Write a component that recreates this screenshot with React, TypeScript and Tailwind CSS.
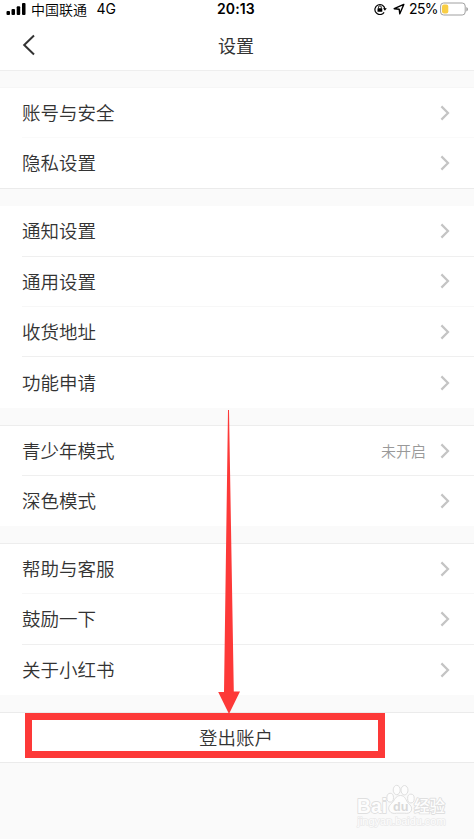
type Item = { label: string; value?: string; divider?: string };
type Section = { items: Item[]; className: string };

const FAINT = 'border-[#fafafa]';
const LINE = 'border-[#efefef]';

const sections: Section[] = [
  {
    className: 'h-[101.6px] border-t border-t-[#f6f6f6] border-b border-b-[#ebebeb]',
    items: [{ label: '账号与安全', divider: FAINT }, { label: '隐私设置' }],
  },
  {
    className: 'h-[201.4px]',
    items: [
      { label: '通知设置', divider: LINE },
      { label: '通用设置', divider: 'border-[#f7f7f7]' },
      { label: '收货地址', divider: LINE },
      { label: '功能申请' },
    ],
  },
  {
    className: 'h-[100.8px] border-t border-t-[#ededed]',
    items: [{ label: '青少年模式', value: '未开启', divider: LINE }, { label: '深色模式' }],
  },
  {
    className: 'h-[151.4px] border-t border-t-[#ededed]',
    items: [
      { label: '帮助与客服', divider: 'border-[#f7f7f7]' },
      { label: '鼓励一下', divider: LINE },
      { label: '关于小红书' },
    ],
  },
];

function StatusBar() {
  return (
    <div className="relative flex h-[18px] items-center justify-between pl-[6px] pr-[5px] text-[14px] leading-[18px] text-black">
      <div className="flex items-center">
        <svg width="20" height="13" viewBox="0 0 20 13" className="mb-px mr-[5px]">
          <rect x="0.5" y="9" width="3.5" height="4" rx="1" />
          <rect x="5.5" y="7" width="3.5" height="6" rx="1" />
          <rect x="10.7" y="4.2" width="3.5" height="8.8" rx="1" />
          <rect x="16" y="1" width="3.5" height="12" rx="1" />
        </svg>
        <span className="pb-px text-[14px] font-[350]">中国联通</span>
        <span className="ml-[9.5px] font-[Inter] font-normal">4G</span>
      </div>
      <span className="absolute left-[217px] top-0 font-[Inter] font-semibold tracking-[0.1px]">20:13</span>
      <div className="flex items-center">
        <svg width="13" height="12" viewBox="0 0 13 12" fill="none" stroke="#000" className="mr-[6px]">
          <path d="M10.1 9.3A5 5 0 1 1 10.9 6" strokeWidth="1.2" />
          <path d="M9 5.2h3.8L10.9 7.8Z" fill="#000" stroke="none" />
          <rect x="3.5" y="5.3" width="4.8" height="3.5" rx="0.4" fill="#000" stroke="none" />
          <path d="M4.5 5.5V4.2a1.4 1.4 0 0 1 2.8 0v1.3" strokeWidth="0.9" />
        </svg>
        <svg width="12" height="12" viewBox="0 0 12 12" fill="none" stroke="#000" strokeWidth="1.4" strokeLinejoin="round" className="mr-[4px]">
          <path d="M10.8 1.400 1.200 5.700 6.200 6.200 6.800 10.800Z" />
        </svg>
        <span className="font-[Inter] font-normal tracking-[-0.6px]">25%</span>
        <svg width="29" height="14" viewBox="0 0 29 14" className="mb-px ml-[2px]">
          <rect x="0.6" y="1" width="24.6" height="12" rx="3" fill="#fff" stroke="#a0a0a0" />
          <rect x="2" y="2.4" width="6.3" height="9.2" rx="2" fill="#f9ce45" />
          <path d="M26.3 5v4.6c1.2-.5 1.7-1.3 1.7-2.3s-.5-1.8-1.7-2.3Z" fill="#a0a0a0" />
        </svg>
      </div>
    </div>
  );
}

function Chevron() {
  return (
    <svg width="10" height="16" viewBox="0 0 10 16" fill="none" stroke="#c4c4c4" strokeWidth="2.2">
      <path d="M1.400 1.400 8 8 1.400 14.600" />
    </svg>
  );
}

function Row({ item }: { item: Item }) {
  return (
    <div className="min-h-0 flex-1 pl-[22px]">
      <div
        className={`flex h-full items-center justify-between pr-[24px] ${item.divider ? `border-b ${item.divider}` : ''}`}
      >
        <span className="pb-px text-[18.5px] leading-none text-[#333]">{item.label}</span>
        <div className="flex items-center gap-[14px]">
          {item.value && <span className="pb-px text-[15px] leading-none text-[#999]">{item.value}</span>}
          <Chevron />
        </div>
      </div>
    </div>
  );
}

function Watermark() {
  return (
    <svg
      className="absolute left-[352px] top-[780px]"
      width="100"
      height="52"
      viewBox="0 0 100 52"
      fill="#fdfdfd"
      stroke="#dfdfdf"
      strokeLinejoin="round"
      fontFamily="'Liberation Sans', 'Noto Sans CJK SC', sans-serif"
    >
      <g paintOrder="stroke" strokeWidth="1.800">
        <text x="5" y="32.500" fontSize="20" fontWeight="700" textLength="30" lengthAdjust="spacingAndGlyphs">Bai</text>
        <text x="62" y="31.500" fontSize="15.500" fontWeight="500" textLength="31" lengthAdjust="spacingAndGlyphs">经验</text>
      </g>
      <path d="M48.500 15.500c-5 0-6 5-9 8-3 2.500-3.500 5-2 7.500 1.500 2.600 5 2.700 7 2.200h8c3 .5 6 0 7-3 .8-3-1-5-3.200-7-2.500-2.700-3-7.700-7.800-7.700Z" />
      <ellipse cx="38.2" cy="17.7" rx="3.3" ry="4.4" />
      <ellipse cx="44.7" cy="10" rx="3.5" ry="4.700" />
      <ellipse cx="52.5" cy="10.2" rx="3.5" ry="4.700" />
      <ellipse cx="58.9" cy="18.5" rx="3.3" ry="4.400" />
      <text x="41" y="31" fontSize="13.500" fontWeight="700" textLength="15.500" lengthAdjust="spacingAndGlyphs" fill="#d9d9d9" stroke="none">du</text>
      <text
        x="5.500"
        y="45"
        fontSize="10.500"
        textLength="88"
        lengthAdjust="spacingAndGlyphs"
        paintOrder="stroke"
        stroke="#eaeaea"
        strokeWidth="1.500"
      >
        jingyan.baidu.com
      </text>
    </svg>
  );
}

export default function App() {
  return (
    <div className="relative h-[839px] w-[474px] overflow-hidden bg-[#fafafa] font-['Noto_Sans_CJK_SC','Liberation_Sans',sans-serif] font-[350]">
      <header className="h-[71px] border-b border-[#eee] bg-white">
        <StatusBar />
        <div className="relative flex h-[52px] items-center justify-center pr-[2px] pt-[2px]">
          <svg
            className="absolute left-[22px] top-[16px]"
            width="14"
            height="22"
            viewBox="0 0 14 22"
            fill="none"
            stroke="#333"
            strokeWidth="2"
          >
            <path d="M12 1.500 2.200 11 12 20.500" />
          </svg>
          <h1 className="text-[18px] font-normal leading-none text-[#333]">设置</h1>
        </div>
      </header>

      <main className="flex flex-col gap-[17.4px] pt-[16.4px]">
        {sections.map((section, i) => (
          <section key={i} className={`flex flex-col bg-white ${section.className}`}>
            {section.items.map((item) => (
              <Row key={item.label} item={item} />
            ))}
          </section>
        ))}
        <button className="flex h-[50.6px] items-center justify-center border-y border-[#ebebeb] bg-white pr-[2px] text-[18.5px] leading-none text-[#333]">
          登出账户
        </button>
      </main>

      {/* Highlight around the log out button and the arrow that leads to it */}
      <div className="absolute left-[25px] top-[713px] h-[45px] w-[360px] border-[7px] border-[#fd3938]" />
      <svg className="absolute left-[217px] top-[410px]" width="24" height="304" viewBox="0 0 24 304" fill="#fd3938">
        <path d="M11 0h1L16.800 281.500H23L12 304 1.200 282H7Z" />
      </svg>

      <Watermark />
    </div>
  );
}
